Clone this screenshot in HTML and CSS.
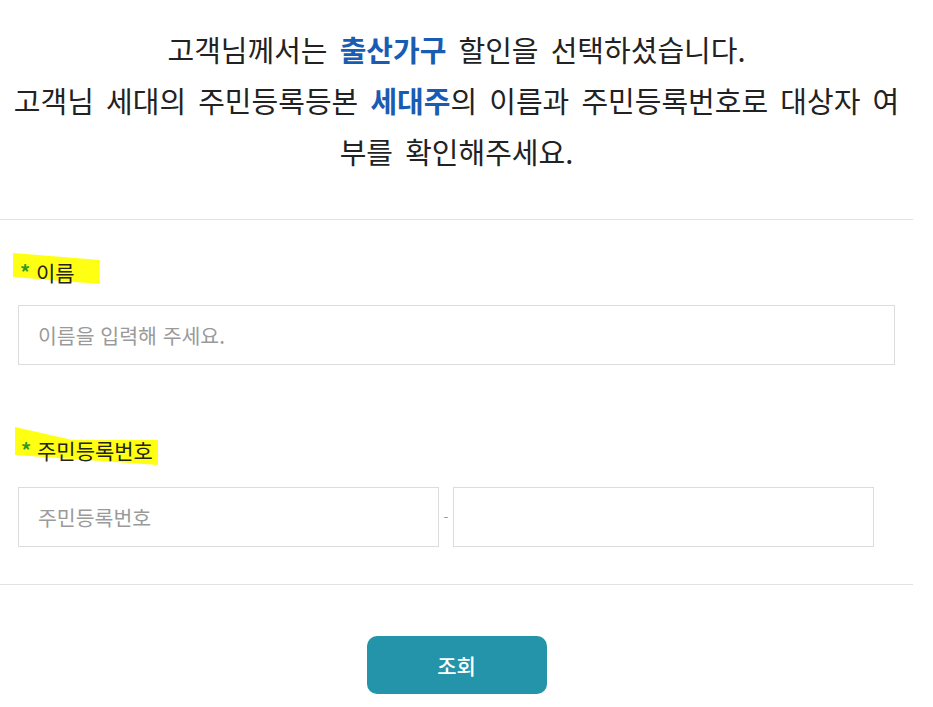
FILE: index.html
```html
<!DOCTYPE html>
<html lang="ko">
<head>
    <meta charset="UTF-8">
    <meta name="viewport" content="width=device-width, initial-scale=1.0">
    <title>출산가구 할인 대상자 확인</title>
    <link rel="stylesheet" href="styles.css">
</head>
<body>
    <div class="wrap">
        <p class="intro">
            고객님께서는 <strong>출산가구</strong> 할인을 선택하셨습니다.<br>
            고객님 세대의 주민등록등본 <strong>세대주</strong>의 이름과 주민등록번호로 대상자 여부를 확인해주세요.
        </p>

        <div class="form">
            <div class="field">
                <label class="label label-name" for="user-name"><span class="req">*</span> 이름</label>
                <input type="text" id="user-name" class="text-input" placeholder="이름을 입력해 주세요.">
            </div>

            <div class="field field-rrn">
                <label class="label label-rrn" for="rrn-front"><span class="req">*</span> 주민등록번호</label>
                <div class="rrn-row">
                    <input type="text" id="rrn-front" class="text-input rrn-input" placeholder="주민등록번호">
                    <span class="dash">-</span>
                    <input type="password" id="rrn-back" class="text-input rrn-input">
                </div>
            </div>
        </div>

        <div class="actions">
            <button type="button" class="btn-search">조회</button>
        </div>
    </div>
</body>
</html>
```

FILE: styles.css
```css
body {
    margin: 0;
    font-family: "Noto Sans CJK KR", "Noto Sans", sans-serif;
    color: #222;
    background-color: #fff;
}
.wrap {
    width: 913px;
}
.intro {
    margin: 0;
    padding: 24px 10px 42px;
    font-size: 29px;
    line-height: 51px;
    word-spacing: 4px;
    text-align: center;
    border-bottom: 1px solid #e2e2e2;
}
.intro strong {
    color: #1b5cb3;
    font-weight: 700;
}
.form {
    padding: 33px 0 37px 18px;
    border-bottom: 1px solid #e2e2e2;
}
.field-rrn {
    margin-top: 62px;
}
.label {
    position: relative;
    z-index: 0;
    display: block;
    width: fit-content;
    font-size: 21px;
    line-height: 28px;
    color: #222;
}
/* highlighter mark behind the label text */
.label::before {
    content: "";
    position: absolute;
    inset: 0;
    z-index: -1;
    background-color: #ffff14;
}
.label-name {
    margin: 0 0 19px -5px;
    padding: 5px 25px 0 7px;
}
.label-name::before {
    clip-path: polygon(0 0, 100% 21%, 100% 94%, 0 73%);
}
.label-rrn {
    margin: 0 0 22px -3px;
    padding: 9px 5px 1px 6px;
}
.label-rrn::before {
    clip-path: polygon(0 0, 40% 34%, 100% 34%, 100% 100%, 0 74%);
}
.req {
    color: #2a9a2a;
    font-size: 20px;
    font-weight: 700;
    vertical-align: 1px;
}
.text-input {
    display: block;
    box-sizing: border-box;
    width: 877px;
    height: 60px;
    padding: 0 19px;
    border: 1px solid #dcdcdc;
    font-family: inherit;
    font-size: 20.5px;
    color: #222;
    outline: none;
}
.text-input::placeholder {
    color: #9a9a9a;
}
.rrn-row {
    display: flex;
    align-items: center;
}
.rrn-input {
    width: 421px;
}
.dash {
    width: 14px;
    text-align: center;
    color: #999;
    font-size: 14px;
}
.actions {
    display: flex;
    justify-content: center;
    padding-top: 51px;
}
.btn-search {
    width: 180px;
    height: 58px;
    border: none;
    border-radius: 10px;
    background-color: #2394aa;
    color: #fff;
    font-family: inherit;
    font-size: 21px;
    font-weight: 500;
    cursor: pointer;
}
```
